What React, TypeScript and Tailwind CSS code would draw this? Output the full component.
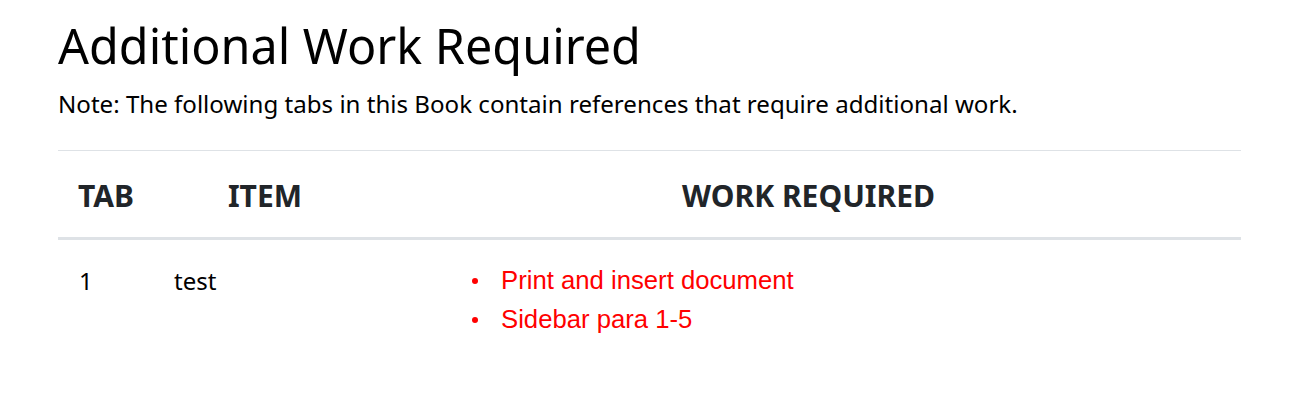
const items = [
  { tab: "1", item: "test", work: ["Print and insert document", "Sidebar para 1-5"] },
];

export default function App() {
  return (
    <div className="min-h-screen bg-white pl-[58px] pr-[52px] pt-[12px] text-black" style={{ fontFamily: '"Noto Sans", "Open Sans", sans-serif' }}>
      <h1 className="text-[48.5px] leading-[66px] font-normal">Additional Work Required</h1>
      <p className="mt-[10px] text-[24.1px] leading-[32px]">
        Note: The following tabs in this Book contain references that require additional work.
      </p>

      <div className="mt-[30px] border-t border-[#dee2e6]">
        <div className="grid grid-cols-[96px_222px_1fr] border-b-[3px] border-[#dee2e6] text-[#212529] text-[30px] font-bold">
          <div className="pt-[28px] pb-[24px] text-center leading-[34px]">TAB</div>
          <div className="pt-[28px] pb-[24px] text-center leading-[34px]">ITEM</div>
          <div className="pt-[28px] pb-[24px] text-center leading-[34px]">WORK REQUIRED</div>
        </div>

        {items.map((row) => (
          <div key={row.tab} className="grid grid-cols-[96px_222px_1fr] text-[24px] leading-[32px]">
            <div className="pl-[21px] pt-[25px]">{row.tab}</div>
            <div className="pl-[20px] pt-[25px]">{row.item}</div>
            <ul className="pl-[96px] pt-[21px]" style={{ fontFamily: '"Liberation Sans", Arial, sans-serif' }}>
              {row.work.map((w) => (
                <li key={w} className="flex items-center gap-[23px] text-[25.7px] leading-[39px] text-[#ff0000]">
                  <span className="h-[6px] w-[6px] shrink-0 rounded-full bg-[#ff0000]" />
                  {w}
                </li>
              ))}
            </ul>
          </div>
        ))}
      </div>
    </div>
  );
}
